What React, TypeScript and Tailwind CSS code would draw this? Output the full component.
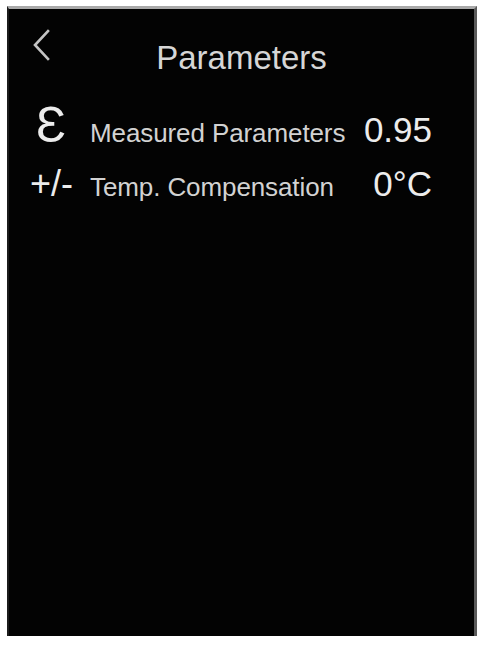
const ROWS = [
  { icon: 'Ɛ', iconClass: 'pl-[27px] text-[50px]', label: 'Measured Parameters', value: '0.95' },
  { icon: '+/-', iconClass: 'pl-[21px] text-[36px]', label: 'Temp. Compensation', value: '0°C' },
];

function BackIcon() {
  return (
    <svg width="22" height="32" viewBox="0 0 22 32" fill="none">
      <path d="M17 2 L4 16 L17 30" stroke="#c4c4c4" strokeWidth="2.6" strokeLinecap="square" />
    </svg>
  );
}

export default function App() {
  return (
    <div
      className="h-[645px] w-[485px] bg-white pl-[7px] pt-[6px]"
      style={{ fontFamily: '"Liberation Sans", Arial, sans-serif' }}
    >
      <div className="h-[630px] w-[470px] border-l-[2px] border-r-[3px] border-t-[3px] border-l-[#1c1c1c] border-r-[#5a5a5a] border-t-[#a9a9a9] bg-[#030303] text-[#dedede]">
        <header className="grid grid-cols-[1fr_auto_1fr] items-start pt-[20px]">
          <div className="pl-[22px]">
            <BackIcon />
          </div>
          <h1 className="pt-[9px] text-[33px] leading-[40px] text-[#d6d6d6]">Parameters</h1>
          <div />
        </header>

        <div className="mt-[22px] flex flex-col gap-[16px] pr-[42px]">
          {ROWS.map((row) => (
            <div key={row.label} className="flex items-baseline leading-none">
              <span className={`w-[81px] shrink-0 text-[#ececec] ${row.iconClass}`}>{row.icon}</span>
              <span className="text-[26px] tracking-[-0.1px] text-[#d2d2d2]">{row.label}</span>
              <span className="ml-auto text-[35px] text-[#ececec]">{row.value}</span>
            </div>
          ))}
        </div>
      </div>
    </div>
  );
}
